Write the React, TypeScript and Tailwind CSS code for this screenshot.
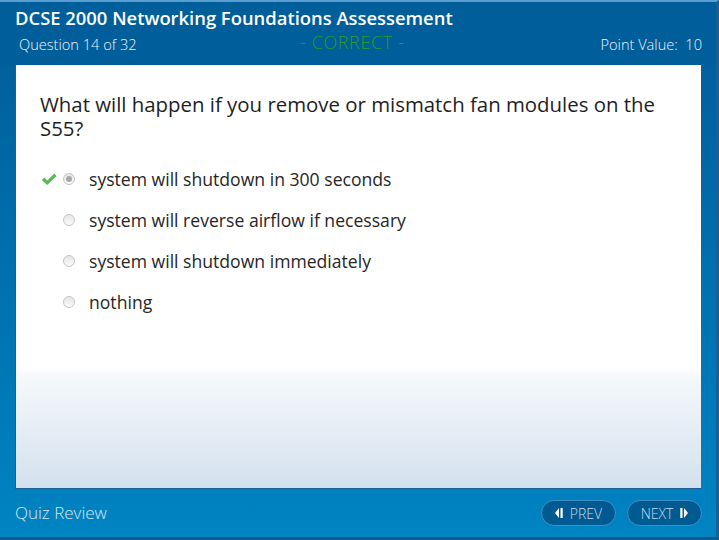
import React from 'react'

const options = [
  'system will shutdown in 300 seconds',
  'system will reverse airflow if necessary',
  'system will shutdown immediately',
  'nothing',
]

function Radio({ checked }: { checked?: boolean }) {
  return (
    <span className="flex h-[12px] w-[12px] items-center justify-center rounded-full border border-[#c4c4c4] bg-gradient-to-b from-[#e6e6e6] to-[#fafafa]">
      {checked && <span className="h-[6px] w-[6px] rounded-full bg-[#a8a8a8]" />}
    </span>
  )
}

function Check() {
  return (
    <svg width="16" height="13" viewBox="0 0 16 13">
      <path d="M0.8 7 L3.4 4.6 L6.2 7.4 L13.4 0.6 L15.6 2.9 L6.2 12 Z" fill="#5cb85c" />
    </svg>
  )
}

export default function App() {
  return (
    <div
      className="h-[540px] w-[719px] overflow-hidden bg-gradient-to-b from-[#005c97] via-[#0070ae] to-[#0084c2] text-white"
      style={{ fontFamily: '"Open Sans", "Noto Sans", sans-serif' }}
    >
      <div className="flex h-full w-full flex-col border-t-2 border-t-[#5a9fd0] border-r-[3px] border-r-[#1e5f92] border-b-[3px] border-b-[#0d5c8e]">
        <header className="flex h-[63px] shrink-0 flex-col bg-[#005e9a] pl-[15px] pr-[14px]">
          <h1 className="mt-[4px] text-[18.4px] font-semibold leading-[24px]">
            DCSE 2000 Networking Foundations Assessement
          </h1>
          <div className="relative mt-[4px] flex items-center justify-between pl-[4px] text-[14.6px] leading-[20px] text-[#eef4f9]">
            <span className="font-light">Question 14 of 32</span>
            <span className="absolute left-[285px] top-[-2px] text-[18px] font-light tracking-[0.6px] text-[#2f9a2a]">- CORRECT -</span>
            <span className="font-light">Point Value:&nbsp; 10</span>
          </div>
        </header>

        <main className="mx-[15px] flex h-[424px] shrink-0 flex-col border-b border-l border-[#1c5f97] bg-[linear-gradient(to_bottom,#ffffff_0%,#ffffff_71%,#f4f8fb_74%,#e8eff6_84%,#d3e1ee_100%)] text-[#222]">
          <p className="ml-[24px] mt-[27px] w-[630px] text-[20.4px] leading-[24px] text-[#1e1e1e]">
            What will happen if you remove or mismatch fan modules on the S55?
          </p>
          <ul className="mt-[28px] flex flex-col gap-[19px]">
            {options.map((o, i) => (
              <li key={o} className="flex h-[22px] items-center">
                <span className="flex w-[47px] justify-end pr-[6px]">{i === 0 && <Check />}</span>
                <Radio checked={i === 0} />
                <span className="ml-[14px] text-[17.6px] leading-[22px] text-[#262626]">{o}</span>
              </li>
            ))}
          </ul>
        </main>

        <footer className="flex flex-1 items-center justify-between pl-[15px] pr-[14px]">
          <span className="text-[17px] font-light text-[#d5e8f4]">Quiz Review</span>
          <div className="flex gap-[11px]">
            <button className="flex h-[26px] w-[75px] items-center justify-center gap-[6px] rounded-full border border-[#3f8fc4] bg-[#005a92] text-[14px] font-light text-[#c9ddeb]">
              <svg width="9" height="10" viewBox="0 0 9 10">
                <path d="M4 0 L4 10 L0 5 Z" fill="#ffffff" />
                <rect x="5.5" y="0" width="2.2" height="10" fill="#ffffff" />
              </svg>
              PREV
            </button>
            <button className="flex h-[26px] w-[75px] items-center justify-center gap-[6px] rounded-full border border-[#3f8fc4] bg-[#005a92] text-[14px] font-light text-[#c9ddeb]">
              NEXT
              <svg width="9" height="10" viewBox="0 0 9 10">
                <rect x="1.3" y="0" width="2.2" height="10" fill="#ffffff" />
                <path d="M5 0 L5 10 L9 5 Z" fill="#ffffff" />
              </svg>
            </button>
          </div>
        </footer>
      </div>
    </div>
  )
}
